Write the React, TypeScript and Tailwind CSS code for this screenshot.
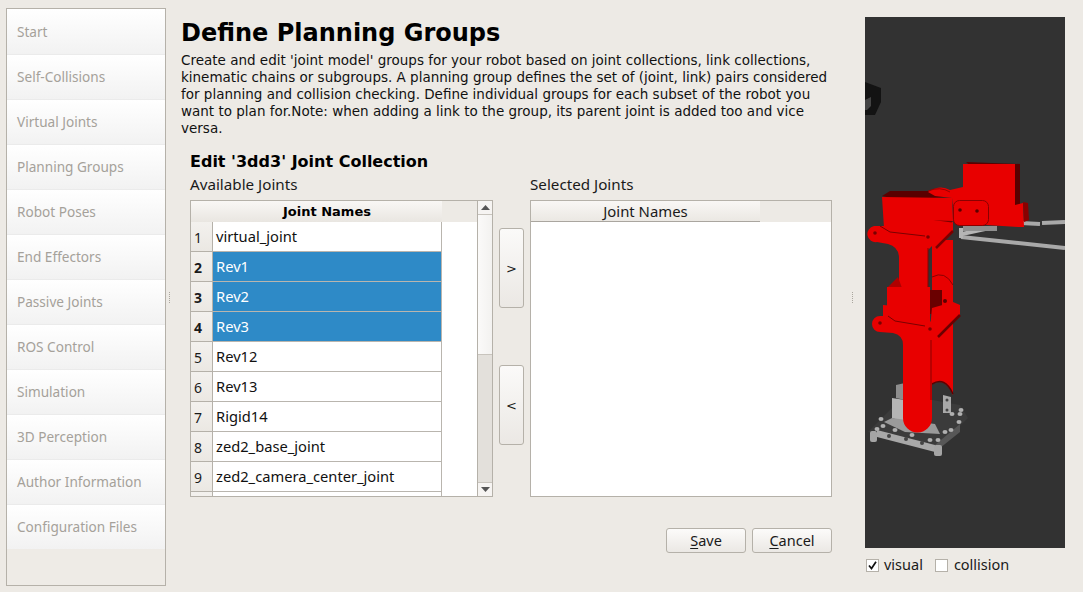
import React from "react";

const nav = ["Start","Self-Collisions","Virtual Joints","Planning Groups","Robot Poses","End Effectors","Passive Joints","ROS Control","Simulation","3D Perception","Author Information","Configuration Files"];
const rows = ["virtual_joint","Rev1","Rev2","Rev3","Rev12","Rev13","Rigid14","zed2_base_joint","zed2_camera_center_joint",""];

function Handle() {
  return (
    <div className="flex flex-col items-center justify-center gap-[1px] w-full h-full">
      {[0,1,2,3,4,5].map((i) => <div key={i} className="w-[1px] h-[1px] bg-[#aaa69e]" />)}
    </div>
  );
}

function Arrow({ up }: { up?: boolean }) {
  return (
    <svg width="9" height="5" viewBox="0 0 9 5">
      <path d={up ? "M4.5 0L9 5H0Z" : "M0 0H9L4.5 5Z"} fill="#555" />
    </svg>
  );
}

function Scene() {
  const bolts = [[877,429],[883,426],[895,430],[912,435],[930,440],[938,440],[945,432],[951,430],[959,422],[960,414],[952,414],[961,410],[881,419]];
  const red = "#e80000";
  return (
    <svg viewBox="865 17 200 531" width="200" height="531" className="block">
      <rect x="865" y="17" width="200" height="531" fill="#323232" />
      <path d="M865 82L873 85L881 88L881 102L875 115L865 115Z" fill="#131313" />
      <path d="M865 100L871 97L871 106L867 110L865 110Z" fill="#444" />
      {/* cables */}
      <path d="M1021 223L1040 224M1042 223L1065 222" stroke="#a9a9a9" strokeWidth="4" fill="none" />
      <path d="M961 237L1065 248" stroke="#a9a9a9" strokeWidth="4" fill="none" />
      <path d="M961 228V238M962 234L985 229" stroke="#b5b5b5" strokeWidth="4" fill="none" />
      <rect x="963" y="226" width="34" height="5" fill="#8f8f8f" />
      {/* base */}
      <path d="M868 432L935 450L968 418L960 405L905 395Z" fill="#3b3b3b" />
      <path d="M892 398L905 400L905 422L892 418Z" fill="#b5b5b5" />
      <path d="M896 385L905 383V400L896 398Z" fill="#8d8d8d" />
      <path d="M884 422L892 418L935 424L940 434L905 432Z" fill="#9a9a9a" />
      <path d="M877 430L935 445V452L877 437Z" fill="#a8a8a8" />
      <path d="M935 445L960 424V432L935 452Z" fill="#575757" />
      <path d="M943 395L951 397V413L943 413Z" fill="#a9a9a9" />
      <circle cx="947" cy="400" r="1.5" fill="#444" />
      <circle cx="947" cy="410" r="1.5" fill="#444" />
      <circle cx="889" cy="436" r="2" fill="#444" />
      <circle cx="906" cy="439" r="2" fill="#444" />
      <circle cx="922" cy="443" r="2" fill="#444" />
      <rect x="870" y="431" width="7" height="11" rx="2" fill="#a5a5a5" />
      <rect x="934" y="445" width="8" height="11" rx="2" fill="#a5a5a5" />
      {bolts.map(([x,y],i) => <ellipse key={i} cx={x} cy={y} rx="2.500" ry="2" fill="#b0b0b0" />)}
      {/* rear column */}
      <path d="M932 384Q945 376 953 395V240L932 240Z" fill={red} />
      <path d="M932 384Q945 376 953 394" stroke="#5c0000" strokeWidth="1.500" fill="none" />
      <path d="M928 218L953 222V232L936 249L928 240Z" fill={red} />
      <path d="M953 231L936 248" stroke="#7a0000" strokeWidth="2.500" />
      <path d="M930 218L952 221" stroke="#7a0000" strokeWidth="3" />
      <path d="M930 290H942V314H930Z" fill="#6a0000" />
      <path d="M932 277Q945 270 953 285V305H942V290L932 288Z" fill={red} />
      <path d="M932 277Q945 270 953 285" stroke="#8a0000" strokeWidth="1" fill="none" />
      <circle cx="945" cy="301" r="2" fill="#5a0000" />
      <path d="M932 308L953 302L960 305L960 315L938 337L930 329Z" fill={red} />
      <path d="M960 315L938 337" stroke="#6a0000" strokeWidth="2.500" />
      {/* top blocks */}
      <path d="M966 162L1020 164L1020 205H1014Z" fill="#5a0000" />
      <path d="M963 164H1015V205H963Z" fill={red} />
      <path d="M882 196L890 191L928 191L950 197L900 200Z" fill="#5a0000" />
      <path d="M882 197L952 198L953 221L928 220V232L884 228Z" fill={red} />
      <path d="M928 192Q940 184 950 190L963 187V205L1015 205L1023 203L1024 227L1018 227L955 223L952 198L935 196Z" fill={red} />
      <path d="M1023 202L1028 203L1029 220L1024 222Z" fill="#8a0000" />
      <path d="M928 191Q940 186 950 192" stroke="#9a0000" strokeWidth="1" fill="none" />
      <rect x="953.500" y="200.500" width="35" height="25" rx="6" fill={red} stroke="#8a0000" />
      <circle cx="960" cy="210" r="1.800" fill="#5a0000" />
      <circle cx="977" cy="211" r="1.800" fill="#5a0000" />
      {/* top clamp + arm */}
      <path d="M899 258Q899 247 888 244L877 242A8 8 0 0 1 874 226L885 226L925 230A8 8 0 0 1 936 242L928 250V300L899 300Z" fill={red} />
      <path d="M880 226L890 232L925 236" stroke="#7a0000" strokeWidth="1" fill="none" />
      <circle cx="875" cy="233" r="1.800" fill="#7a0000" />
      <circle cx="928" cy="237" r="1.800" fill="#7a0000" />
      <path d="M928 248V298" stroke="#8a0000" strokeWidth="1" />
      {/* second block */}
      <path d="M892 283L898 277L902 288H887Z" fill="#b00000" />
      <path d="M887 287H930V310H887Z" fill={red} />
      <path d="M883 305L930 309V324L883 318Z" fill={red} />
      {/* lower clamp + arm */}
      <path d="M903 345Q903 335 893 333L880 332A8 8 0 0 1 880 316L892 316L928 322A8 8 0 0 1 937 334L932 342V418A14.500 14.500 0 0 1 903 418Z" fill={red} />
      <path d="M888 316L895 321L925 326" stroke="#7a0000" strokeWidth="1" fill="none" />
      <circle cx="880" cy="323" r="1.800" fill="#7a0000" />
      <circle cx="930" cy="329" r="1.800" fill="#7a0000" />
      <path d="M931 340V400" stroke="#8a0000" strokeWidth="1" />
    </svg>
  );
}

export default function App() {
  return (
    <div className="flex w-[1083px] h-[592px] overflow-hidden bg-[#edeae5] text-[#1a1a1a] font-['Noto_Sans',sans-serif]">
      <div className="ml-[6px] mt-[8px] w-[160px] h-[578px] border border-[#b5b1a9] shrink-0 bg-[#eeebe6]">
        {nav.map((n, i) => (
          <div key={n} className={`h-[45px] pl-[10px] flex items-center text-[13.600px] text-[#a5a19a] bg-gradient-to-b from-[#ffffff] to-[#f2f2f2] ${i > 0 ? "border-t border-[#ebebeb]" : "pt-[1px]"}`}>{n}</div>
        ))}
      </div>
      <div className="w-[7px] shrink-0 h-full pt-[2px]"><Handle /></div>
      <div className="w-[677px] shrink-0 pl-[8px] flex flex-col">
        <h1 className="mt-[18px] h-[30px] leading-[30px] text-[24px] font-bold font-['DejaVu_Sans',sans-serif] whitespace-nowrap text-black">Define Planning Groups</h1>
        <p className="mt-[4px] h-[85px] text-[13.500px] leading-[17px] font-['DejaVu_Sans',sans-serif] whitespace-nowrap text-[#111]">
          Create and edit 'joint model' groups for your robot based on joint collections, link collections,<br />
          kinematic chains or subgroups. A planning group defines the set of (joint, link) pairs considered<br />
          for planning and collision checking. Define individual groups for each subset of the robot you<br />
          want to plan for.Note: when adding a link to the group, its parent joint is added too and vice<br />
          versa.
        </p>
        <div className="ml-[9px] w-[642px] flex flex-col">
          <h2 className="mt-[15px] h-[20px] leading-[20px] text-[16px] font-bold font-['DejaVu_Sans',sans-serif] whitespace-nowrap text-black">Edit '3dd3' Joint Collection</h2>
          <div className="flex mt-[2px] text-[15.200px] h-[20px] leading-[20px]">
            <div className="w-[340px]">Available Joints</div>
            <div>Selected Joints</div>
          </div>
          <div className="flex mt-[6px] h-[297px]">
            <div className="w-[303px] h-full border border-[#b5b1a9] flex overflow-hidden">
              <div className="w-[286px] h-full bg-white overflow-hidden">
                <div className="flex h-[21px] bg-[#edeae5]">
                  <div className="flex w-[251px] bg-gradient-to-b from-[#f9f7f5] to-[#e9e6e1]">
                    <div className="w-[21px]" />
                    <div className="flex-1 text-center text-[13px] leading-[21px] font-bold font-['DejaVu_Sans',sans-serif] text-black">Joint Names</div>
                  </div>
                </div>
                {rows.map((r, i) => {
                  const sel = i >= 1 && i <= 3;
                  return (
                    <div key={i} className="flex h-[30px] w-[251px]">
                      <div className={`w-[22px] shrink-0 pl-[3px] pt-[1px] flex items-center text-[14px] bg-gradient-to-b from-[#f3f1ee] to-[#ebe8e3] border-b border-r border-[#b5b1a9] border-t-0 ${sel ? "font-bold" : ""}`}>{r ? i + 1 : ""}</div>
                      <div className={`flex-1 pl-[3px] pb-[1px] flex items-center text-[14.700px] border-b border-r border-[#b9b5ae] whitespace-nowrap ${sel ? "bg-[#2e8ac7] text-white" : "bg-white text-[#111]"}`}>{r}</div>
                    </div>
                  );
                })}
              </div>
              <div className="w-[15px] h-full border-l border-[#b5b1a9] flex flex-col bg-[#e3e0db]">
                <div className="h-[14px] flex items-center justify-center bg-[#f6f4f2] border-b border-[#c8c4bd]"><Arrow up /></div>
                <div className="h-[140px] bg-gradient-to-r from-[#fbfaf9] to-[#f3f2f0] border-b border-[#c8c4bd]" />
                <div className="flex-1" />
                <div className="h-[14px] flex items-center justify-center bg-[#f6f4f2] border-t border-[#c8c4bd]"><Arrow /></div>
              </div>
            </div>
            <div className="w-[25px] ml-[6px] flex flex-col pt-[28px] gap-[57px]">
              <button className="h-[80px] pt-[2px] rounded-[3px] border border-[#b5b1a9] bg-gradient-to-b from-[#fbfaf9] to-[#ebe8e4] text-[13px] font-['DejaVu_Sans',sans-serif]">&gt;</button>
              <button className="h-[80px] pt-[2px] rounded-[3px] border border-[#b5b1a9] bg-gradient-to-b from-[#fbfaf9] to-[#ebe8e4] text-[13px] font-['DejaVu_Sans',sans-serif]">&lt;</button>
            </div>
            <div className="w-[302px] ml-[6px] h-full border border-[#b5b1a9] bg-white">
              <div className="h-[21px] bg-[#edeae5]">
                <div className="w-[229px] h-[21px] text-center text-[14.900px] leading-[21px] bg-gradient-to-b from-[#f9f7f5] to-[#ebe8e3] border-b border-[#aaa69f]">Joint Names</div>
              </div>
            </div>
          </div>
          <div className="flex justify-end gap-[6px] mt-[31px]">
            <button className="w-[80px] h-[25px] rounded-[3px] border border-[#b5b1a9] bg-gradient-to-b from-[#fcfbfa] to-[#ebe8e4] text-[14.500px] leading-[23px]"><u className="underline-offset-2">S</u>ave</button>
            <button className="w-[80px] h-[25px] rounded-[3px] border border-[#b5b1a9] bg-gradient-to-b from-[#fcfbfa] to-[#ebe8e4] text-[14.500px] leading-[23px]"><u className="underline-offset-2">C</u>ancel</button>
          </div>
        </div>
      </div>
      <div className="w-[5px] shrink-0 h-full pt-[2px]"><Handle /></div>
      <div className="ml-[10px] w-[200px] shrink-0 flex flex-col pt-[17px]">
        <Scene />
        <div className="flex items-center mt-[8px] h-[18px] text-[14.500px]">
          <div className="ml-[1px] w-[13px] h-[13px] border border-[#b5b1a9] bg-white flex items-center justify-center">
            <svg width="9" height="9" viewBox="0 0 9 9"><path d="M1 4.500L3.500 7.500L8 0.800" stroke="#111" strokeWidth="1.700" fill="none" /></svg>
          </div>
          <span className="ml-[5px]">visual</span>
          <div className="ml-[12px] w-[13px] h-[13px] border border-[#b5b1a9] bg-white" />
          <span className="ml-[6px]">collision</span>
        </div>
      </div>
    </div>
  );
}
